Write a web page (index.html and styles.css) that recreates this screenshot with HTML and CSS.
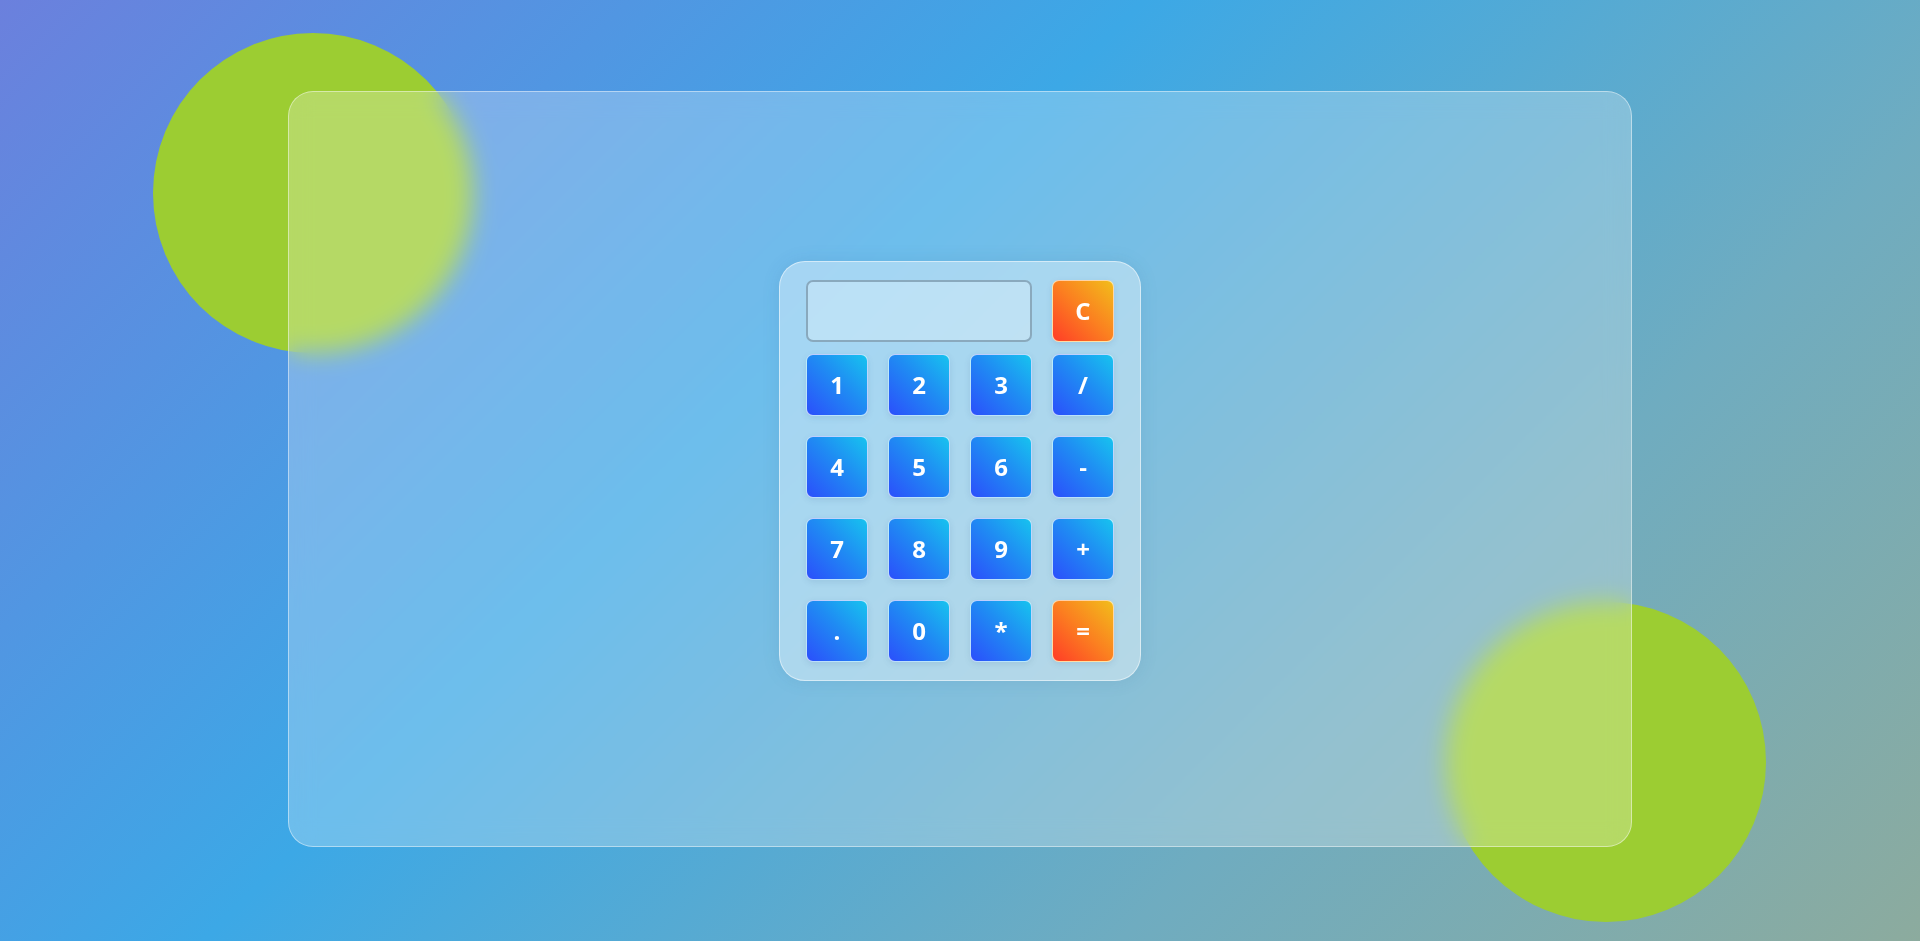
FILE: index.html
```html
<!DOCTYPE html>
<html lang="en">
<head>
<meta charset="utf-8">
<title>Glass Calculator</title>
<link rel="stylesheet" href="styles.css">
</head>
<body>
<div class="scene">
  <div class="blob blob-top"></div>
  <div class="blob blob-bottom"></div>
  <div class="glass">
    <div class="calc">
      <div class="top-row">
        <div class="display"></div>
        <button class="key key-orange">C</button>
      </div>
      <div class="keys">
        <button class="key">1</button>
        <button class="key">2</button>
        <button class="key">3</button>
        <button class="key">/</button>
        <button class="key">4</button>
        <button class="key">5</button>
        <button class="key">6</button>
        <button class="key">-</button>
        <button class="key">7</button>
        <button class="key">8</button>
        <button class="key">9</button>
        <button class="key">+</button>
        <button class="key">.</button>
        <button class="key">0</button>
        <button class="key">*</button>
        <button class="key key-orange">=</button>
      </div>
    </div>
  </div>
</div>
</body>
</html>
```

FILE: styles.css
```css
* { box-sizing: border-box; }
html, body { margin: 0; padding: 0; height: 100%; }
body {
  overflow: hidden;
  font-family: "Open Sans", "DejaVu Sans", sans-serif;
  background: linear-gradient(135deg, #6b80dd 0%, #3ca8e6 40%, #6facc0 72%, #8cab9e 100%);
}
.scene {
  position: relative;
  width: 100vw;
  height: 100vh;
  display: flex;
  align-items: center;
  justify-content: center;
}
.blob {
  position: absolute;
  width: 320px;
  height: 320px;
  border-radius: 50%;
  background: #9ccd32;
}
.blob-top { left: 153px; top: 33px; }
.blob-bottom { left: 1446px; top: 602px; }
.glass {
  position: relative;
  width: 1344px;
  height: 756px;
  margin-top: -3px;
  border-radius: 25px;
  border: 1px solid rgba(255, 255, 255, 0.45);
  background: rgba(255, 255, 255, 0.25);
  backdrop-filter: blur(12px);
  -webkit-backdrop-filter: blur(12px);
  display: flex;
  align-items: center;
  justify-content: center;
}
.calc {
  width: 362px;
  height: 420px;
  margin-top: 3px;
  padding: 18px 26px;
  border-radius: 26px;
  border: 1px solid rgba(255, 255, 255, 0.5);
  background: rgba(255, 255, 255, 0.38);
  box-shadow: 0 0 18px rgba(40, 90, 130, 0.12);
}
.top-row {
  display: flex;
  gap: 20px;
  margin-bottom: 12px;
}
.display {
  width: 226px;
  height: 62px;
  border-radius: 7px;
  border: 2px solid rgba(120, 150, 170, 0.75);
  background: rgba(255, 255, 255, 0.25);
}
.keys {
  display: grid;
  grid-template-columns: repeat(4, 62px);
  grid-auto-rows: 62px;
  gap: 20px;
}
.key {
  width: 62px;
  height: 62px;
  padding: 0 0 0 0;
  border-radius: 7px;
  border: 1px solid rgba(255, 255, 255, 0.7);
  background: linear-gradient(45deg, #2b4ffb 0%, #1f8cf3 55%, #17c3ef 100%);
  color: #fff;
  font-family: "Open Sans", "DejaVu Sans", sans-serif;
  font-weight: 700;
  font-size: 24px;
  line-height: 1;
  display: flex;
  align-items: center;
  justify-content: center;
  box-shadow: 0 2px 6px rgba(30, 70, 120, 0.12);
}
.key-orange {
  border-color: rgba(255, 240, 200, 0.8);
  background: linear-gradient(45deg, #ff3d27 0%, #fb7f20 50%, #f2bd1b 100%);
}
```
